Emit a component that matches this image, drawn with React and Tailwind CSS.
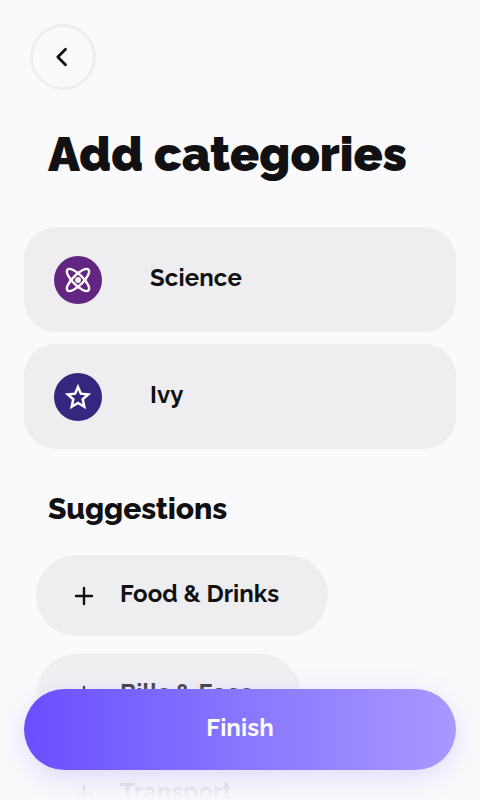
import React from "react";

function Science() {
  return (
    <svg width="48" height="48" viewBox="0 0 48 48" fill="none" stroke="white" strokeWidth="2.4">
      <ellipse cx="24" cy="24" rx="14.8" ry="5.2" transform="rotate(45 24 24)" />
      <ellipse cx="24" cy="24" rx="14.8" ry="5.2" transform="rotate(-45 24 24)" />
      <circle cx="24" cy="24" r="2.9" fill="white" stroke="none" />
    </svg>
  );
}

function Star() {
  return (
    <svg width="48" height="48" viewBox="0 0 48 48" fill="none" stroke="white" strokeWidth="2.5">
      <path d="M24 13.9 L26.9 20.7 L34.2 21.4 L28.7 26.3 L30.3 33.7 L24 29.9 L17.7 33.7 L19.3 26.3 L13.8 21.4 L21.1 20.7 Z" />
    </svg>
  );
}

function Category({ color, icon, children }) {
  return (
    <div className="flex h-[105px] items-center rounded-[32px] bg-[#eeeef0] pl-[30px]">
      <div className={`size-12 rounded-full ${color}`}>{icon}</div>
      <div className="ml-12 -mt-1 text-2xl leading-8 font-bold tracking-[0.12px]">{children}</div>
    </div>
  );
}

function Suggestion({ width, children }) {
  return (
    <div className={`flex h-[81px] shrink-0 items-center rounded-full bg-[#eeeef0] pl-9 ${width}`}>
      <svg width="24" height="24" viewBox="0 0 24 24" fill="none" stroke="#111114" strokeWidth="2.4" strokeLinecap="round">
        <path d="M4 12H20M12 4V20" />
      </svg>
      <div className="ml-6 -mt-1 text-2xl leading-8 font-bold tracking-[0.05px] whitespace-nowrap">{children}</div>
    </div>
  );
}

export default function App() {
  return (
    <div className="relative h-[800px] w-[480px] overflow-hidden bg-[#fafafc] font-['Raleway','Lato',sans-serif] text-[#111114]">
      <div className="px-6 pt-6">
        <button className="ml-1.5 flex size-[66px] items-center justify-center rounded-full border-3 border-[#eeeef0]">
          <svg width="24" height="24" viewBox="0 0 24 24" fill="none" stroke="#111114" strokeWidth="2.8" strokeLinecap="round" strokeLinejoin="round">
            <path d="M14.5 4.3L6.8 12L14.5 19.7" />
          </svg>
        </button>
        <h1 className="mt-9 ml-6 text-[48px] leading-[56px] font-black whitespace-nowrap">Add categories</h1>
        <div className="mt-[45px] flex flex-col gap-3">
          <Category color="bg-[#622681]" icon={<Science />}>Science</Category>
          <Category color="bg-[#352680]" icon={<Star />}>Ivy</Category>
        </div>
        <h2 className="mt-10 ml-6 text-[30px] leading-10 font-extrabold tracking-[-0.1px]">Suggestions</h2>
        <div className="mt-[26px] ml-3 flex flex-col gap-[18px]">
          <Suggestion width="w-[292px]">Food &amp; Drinks</Suggestion>
          <Suggestion width="w-[265px]">Bills &amp; Fees</Suggestion>
          <Suggestion width="w-[244px]">Transport</Suggestion>
        </div>
      </div>
      <div className="absolute inset-x-0 bottom-0 h-[150px] bg-linear-to-b from-[#fafafc]/0 to-[#fafafc]" />
      <button className="absolute top-[689px] left-6 flex h-[81px] w-[432px] items-center justify-center rounded-full bg-linear-to-r from-[#6b4dff] to-[#a998ff] pb-1 text-2xl font-bold tracking-[0.1px] text-[#fafafc] shadow-[0_7px_28px_rgba(107,77,255,0.18)]">Finish</button>
    </div>
  );
}
